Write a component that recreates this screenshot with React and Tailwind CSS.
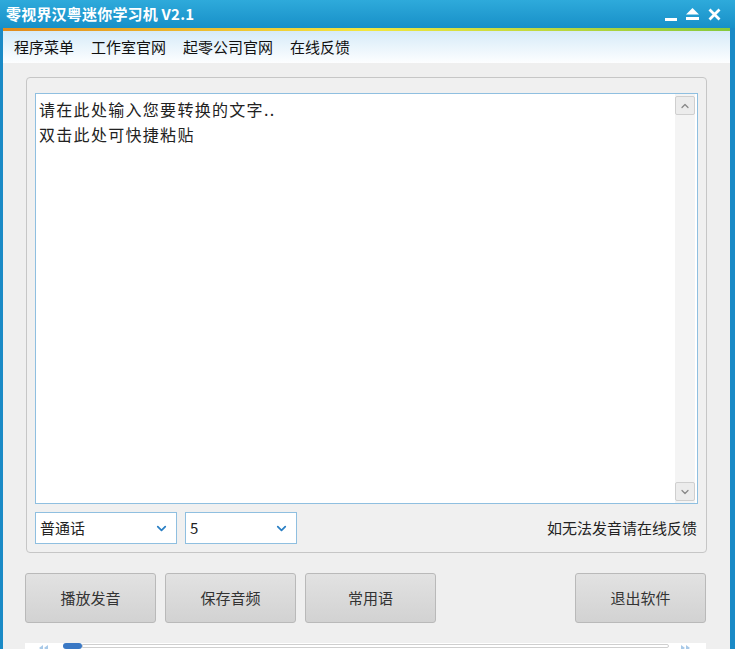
import { ChevronDown, ChevronUp } from "lucide-react";

const font = { fontFamily: '"Microsoft YaHei", "Noto Sans CJK SC", sans-serif' };

/* ── 标题栏按钮 ── */
function TitleButtons() {
  return (
    <div className="flex items-center gap-[9px] pr-[14px] pt-[8px]">
      <span className="block w-[12px] h-[3px] bg-white mt-[9px]" />
      <svg width="13" height="13" viewBox="0 0 13 13">
        <polygon points="6.5,0 13,6.5 0,6.5" fill="white" />
        <rect x="0" y="9" width="13" height="3" fill="white" />
      </svg>
      <svg width="13" height="13" viewBox="0 0 13 13">
        <path d="M1.5 1.5 L11.5 11.5 M11.5 1.5 L1.5 11.5" stroke="white" strokeWidth="2.8" />
      </svg>
    </div>
  );
}

/* ── 下拉框 ── */
function Select({ value, width }) {
  return (
    <div
      className={`${width} h-[32px] bg-white border border-[#8fbfe0] flex items-center justify-between pl-[4px] pr-[7px] text-[15px] text-[#222]`}
    >
      <span>{value}</span>
      <ChevronDown size={15} strokeWidth={2.8} className="text-[#2a7fc4]" />
    </div>
  );
}

/* ── 按钮 ── */
function Btn({ children }) {
  return (
    <button className="w-[131px] h-[50px] rounded-[3px] border border-[#b9b9b9] bg-gradient-to-b from-[#e2e2e2] to-[#d2d2d2] text-[15px] text-[#333]">
      {children}
    </button>
  );
}

/* ── 进度条两端的双三角 ── */
function DoubleArrow({ dir }) {
  const pts = dir === "left" ? ["4,0 4,6 0,3", "9,0 9,6 5,3"] : ["0,0 0,6 4,3", "5,0 5,6 9,3"];
  return (
    <svg width="9" height="6" viewBox="0 0 9 6" className="mt-[2px]">
      {pts.map((p) => (
        <polygon key={p} points={p} fill="#a8c9e8" />
      ))}
    </svg>
  );
}

export default function App() {
  return (
    <div className="w-[735px] h-[649px] overflow-hidden bg-[#1a8ac6] flex flex-col" style={font}>
      {/* 标题栏 */}
      <div className="h-[28px] shrink-0 flex items-start justify-between bg-gradient-to-b from-[#2eaadb] to-[#1790c8]">
        <span className="text-white font-bold text-[15px] tracking-[0.2px] pl-[6px] pt-[4px] leading-[19px]">零视界汉粤迷你学习机 V2.1</span>
        <TitleButtons />
      </div>
      <div className="h-[3px] shrink-0 mx-[3px] mr-[5px] bg-gradient-to-r from-[#e08a1e] via-[#f2e640] to-[#86c93c]" />

      <div className="flex-1 flex flex-col ml-[3px] mr-[5px] bg-[#efefef]">
        {/* 菜单栏 */}
        <div className="h-[32px] shrink-0 flex items-center gap-[17px] pl-[11px] text-[15px] text-[#111] bg-gradient-to-b from-[#d6ebf8] to-[#fdfeff]">
          <span>程序菜单</span>
          <span>工作室官网</span>
          <span>起零公司官网</span>
          <span>在线反馈</span>
        </div>

        {/* 主面板 */}
        <div className="mt-[14px] ml-[23px] w-[681px] h-[476px] rounded-[4px] border border-[#c6c6c6] bg-[#f0f0f0] flex flex-col px-[8px] pt-[15px]">
          <div className="h-[411px] bg-white border border-[#8fbfe0] flex">
            <div className="flex-1 px-[3px] pt-[3px] text-[16px] tracking-[1.3px] leading-[25px] text-[#222]">
              <p>请在此处输入您要转换的文字..</p>
              <p>双击此处可快捷粘贴</p>
            </div>
            <div className="w-[20px] mr-[2px] py-[2px] flex flex-col justify-between bg-[#f4f4f4]">
              <div className="h-[19px] rounded-[2px] border border-[#cfcfcf] bg-[#ececec] flex items-center justify-center">
                <ChevronUp size={12} strokeWidth={2.5} className="text-[#888]" />
              </div>
              <div className="h-[19px] rounded-[2px] border border-[#cfcfcf] bg-[#ececec] flex items-center justify-center">
                <ChevronDown size={12} strokeWidth={2.5} className="text-[#888]" />
              </div>
            </div>
          </div>

          <div className="mt-[8px] flex items-center gap-[8px]">
            <Select value="普通话" width="w-[142px]" />
            <Select value="5" width="w-[112px]" />
            <span className="ml-auto text-[15px] text-[#222] pr-[1px]">如无法发音请在线反馈</span>
          </div>
        </div>

        {/* 按钮行 */}
        <div className="mt-[20px] ml-[22px] flex gap-[9px]">
          <Btn>播放发音</Btn>
          <Btn>保存音频</Btn>
          <Btn>常用语</Btn>
          <div className="ml-[130px]">
            <Btn>退出软件</Btn>
          </div>
        </div>

        {/* 进度条 */}
        <div className="mt-[20px] ml-[22px] w-[681px] h-[10px] bg-white flex items-start">
          <div className="ml-[14px]">
            <DoubleArrow dir="left" />
          </div>
          <span className="ml-[15px] w-[19px] h-[6px] rounded-full bg-[#3a78c4]" />
          <span className="flex-1 h-[4px] mt-[1px] border border-[#cfcfcf] rounded-r-full" />
          <div className="ml-[12px] mr-[16px]">
            <DoubleArrow dir="right" />
          </div>
        </div>
      </div>
    </div>
  );
}
